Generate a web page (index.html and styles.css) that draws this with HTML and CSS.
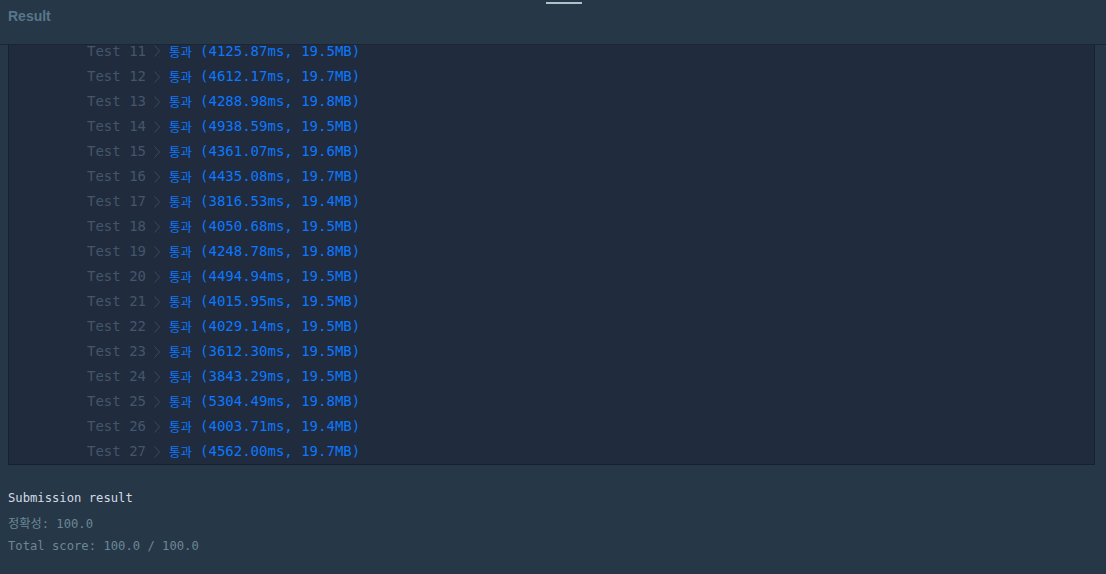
FILE: index.html
```html
<!DOCTYPE html>
<html lang="ko">

<head>
    <meta charset="UTF-8">
    <meta name="viewport" content="width=device-width, initial-scale=1.0">
    <title>Result</title>
    <link rel="stylesheet" href="styles.css">
</head>

<body>
    <div class="handle"></div>

    <div class="header">
        <h2 class="title">Result</h2>
    </div>

    <div class="output">
        <ul class="tests">
            <li><span class="name">Test 11</span><svg class="chev" width="6" height="12" viewBox="0 0 6 12"><path d="M0.5 0.5 L5.5 6 L0.5 11.5" /></svg><span class="verdict">통과</span><span class="pass">(4125.87ms, 19.5MB)</span></li>
            <li><span class="name">Test 12</span><svg class="chev" width="6" height="12" viewBox="0 0 6 12"><path d="M0.5 0.5 L5.5 6 L0.5 11.5" /></svg><span class="verdict">통과</span><span class="pass">(4612.17ms, 19.7MB)</span></li>
            <li><span class="name">Test 13</span><svg class="chev" width="6" height="12" viewBox="0 0 6 12"><path d="M0.5 0.5 L5.5 6 L0.5 11.5" /></svg><span class="verdict">통과</span><span class="pass">(4288.98ms, 19.8MB)</span></li>
            <li><span class="name">Test 14</span><svg class="chev" width="6" height="12" viewBox="0 0 6 12"><path d="M0.5 0.5 L5.5 6 L0.5 11.5" /></svg><span class="verdict">통과</span><span class="pass">(4938.59ms, 19.5MB)</span></li>
            <li><span class="name">Test 15</span><svg class="chev" width="6" height="12" viewBox="0 0 6 12"><path d="M0.5 0.5 L5.5 6 L0.5 11.5" /></svg><span class="verdict">통과</span><span class="pass">(4361.07ms, 19.6MB)</span></li>
            <li><span class="name">Test 16</span><svg class="chev" width="6" height="12" viewBox="0 0 6 12"><path d="M0.5 0.5 L5.5 6 L0.5 11.5" /></svg><span class="verdict">통과</span><span class="pass">(4435.08ms, 19.7MB)</span></li>
            <li><span class="name">Test 17</span><svg class="chev" width="6" height="12" viewBox="0 0 6 12"><path d="M0.5 0.5 L5.5 6 L0.5 11.5" /></svg><span class="verdict">통과</span><span class="pass">(3816.53ms, 19.4MB)</span></li>
            <li><span class="name">Test 18</span><svg class="chev" width="6" height="12" viewBox="0 0 6 12"><path d="M0.5 0.5 L5.5 6 L0.5 11.5" /></svg><span class="verdict">통과</span><span class="pass">(4050.68ms, 19.5MB)</span></li>
            <li><span class="name">Test 19</span><svg class="chev" width="6" height="12" viewBox="0 0 6 12"><path d="M0.5 0.5 L5.5 6 L0.5 11.5" /></svg><span class="verdict">통과</span><span class="pass">(4248.78ms, 19.8MB)</span></li>
            <li><span class="name">Test 20</span><svg class="chev" width="6" height="12" viewBox="0 0 6 12"><path d="M0.5 0.5 L5.5 6 L0.5 11.5" /></svg><span class="verdict">통과</span><span class="pass">(4494.94ms, 19.5MB)</span></li>
            <li><span class="name">Test 21</span><svg class="chev" width="6" height="12" viewBox="0 0 6 12"><path d="M0.5 0.5 L5.5 6 L0.5 11.5" /></svg><span class="verdict">통과</span><span class="pass">(4015.95ms, 19.5MB)</span></li>
            <li><span class="name">Test 22</span><svg class="chev" width="6" height="12" viewBox="0 0 6 12"><path d="M0.5 0.5 L5.5 6 L0.5 11.5" /></svg><span class="verdict">통과</span><span class="pass">(4029.14ms, 19.5MB)</span></li>
            <li><span class="name">Test 23</span><svg class="chev" width="6" height="12" viewBox="0 0 6 12"><path d="M0.5 0.5 L5.5 6 L0.5 11.5" /></svg><span class="verdict">통과</span><span class="pass">(3612.30ms, 19.5MB)</span></li>
            <li><span class="name">Test 24</span><svg class="chev" width="6" height="12" viewBox="0 0 6 12"><path d="M0.5 0.5 L5.5 6 L0.5 11.5" /></svg><span class="verdict">통과</span><span class="pass">(3843.29ms, 19.5MB)</span></li>
            <li><span class="name">Test 25</span><svg class="chev" width="6" height="12" viewBox="0 0 6 12"><path d="M0.5 0.5 L5.5 6 L0.5 11.5" /></svg><span class="verdict">통과</span><span class="pass">(5304.49ms, 19.8MB)</span></li>
            <li><span class="name">Test 26</span><svg class="chev" width="6" height="12" viewBox="0 0 6 12"><path d="M0.5 0.5 L5.5 6 L0.5 11.5" /></svg><span class="verdict">통과</span><span class="pass">(4003.71ms, 19.4MB)</span></li>
            <li><span class="name">Test 27</span><svg class="chev" width="6" height="12" viewBox="0 0 6 12"><path d="M0.5 0.5 L5.5 6 L0.5 11.5" /></svg><span class="verdict">통과</span><span class="pass">(4562.00ms, 19.7MB)</span></li>
        </ul>
    </div>

    <div class="summary">
        <p class="summary-title">Submission result</p>
        <p class="summary-line">정확성: 100.0</p>
        <p class="summary-line">Total score: 100.0 / 100.0</p>
    </div>
</body>

</html>
```

FILE: styles.css
```css
body {
    margin: 0;
    padding: 0;
    background-color: #263747;
    font-family: "DejaVu Sans Mono", "Noto Sans CJK KR", monospace;
    overflow: hidden;
}

.handle {
    position: absolute;
    top: 2px;
    left: 546px;
    width: 36px;
    height: 2px;
    background-color: #b2c0cc;
}

.header {
    height: 45px;
    padding: 0 8px;
    display: flex;
    align-items: center;
    border-bottom: 1px solid #1a2636;
    box-sizing: border-box;
}

.title {
    margin: 0;
    margin-top: -12px;
    font-family: "Liberation Sans", Arial, sans-serif;
    font-size: 14px;
    font-weight: bold;
    color: #587689;
}

.output {
    margin: 0 11px 0 8px;
    background-color: #202b3d;
    border-left: 1px solid #172131;
    border-right: 1px solid #172131;
    border-bottom: 1px solid #172131;
    height: 419px;
}

.tests {
    list-style: none;
    margin: 0;
    padding: 0 0 0 78px;
}

.tests li {
    height: 25px;
    line-height: 25px;
    font-size: 14px;
    display: flex;
    align-items: center;
    white-space: pre;
}

/* first row sits half under the header */
.tests li:first-child {
    height: 19px;
    line-height: 13px;
    align-items: flex-start;
}

.name {
    color: #45566b;
}

.chev {
    margin: 0 9px 0 8px;
    fill: none;
    stroke: #3b4b5e;
    stroke-width: 1;
}

.verdict {
    font-family: "Noto Sans CJK KR", sans-serif;
    font-size: 12.5px;
    color: #0c78ff;
    margin-right: 8px;
}

.pass {
    color: #0c78ff;
}

.summary {
    padding: 25px 8px 0;
}

.summary-title {
    margin: 0 0 9px;
    font-size: 12.2px;
    line-height: 17px;
    color: #d3dbe3;
}

.summary-line {
    margin: 0 0 5px;
    font-size: 12.2px;
    line-height: 17px;
    color: #6b8797;
}
```
